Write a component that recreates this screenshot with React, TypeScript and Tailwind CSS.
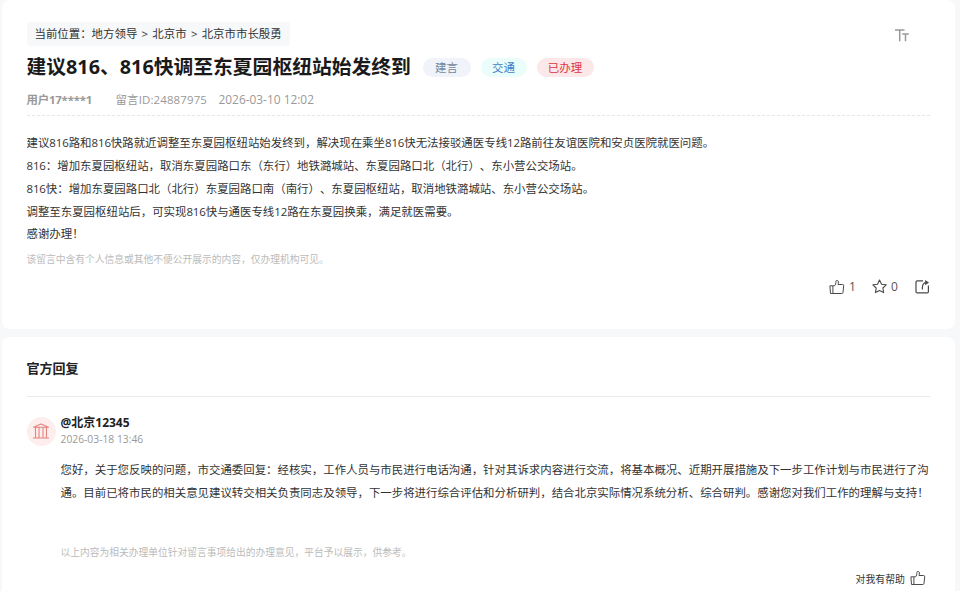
import React from 'react';

function ThumbIcon() {
  return (
    <svg width="16" height="16" viewBox="0 0 16 16" fill="none" stroke="#4a4a4a" strokeWidth="1" strokeLinejoin="round" aria-hidden="true">
      <path d="M.9 6.8h3v7.7H1.5zM3.9 6.8h1.6C6.7 5.8 6.9 4.3 6.9 2.4c0-1.4 2.5-1.4 2.5.5 0 1.1-.1 1.8-.4 2.6h4.6c.8 0 1.2.5 1.1 1.2l-.7 6.7c-.1.7-.5 1.1-1.2 1.1H3.9" />
    </svg>
  );
}

function StarIcon() {
  return (
    <svg width="16" height="16" viewBox="0 0 16 16" fill="none" stroke="#4a4a4a" strokeWidth="1.1" strokeLinejoin="round" aria-hidden="true">
      <path d="M7.5 1l2.1 4.2 4.6.6-3.3 3.2.8 4.6-4.2-2.2-4.1 2.2.8-4.6L.9 5.8l4.6-.6z" />
    </svg>
  );
}

function ShareIcon() {
  return (
    <svg width="16" height="16" viewBox="0 0 16 16" fill="none" stroke="#4a4a4a" strokeWidth="1.2" aria-hidden="true">
      <path d="M9 1.8H3.2c-.8 0-1.2.4-1.2 1.2v9.7c0 .8.4 1.2 1.2 1.2h10c.8 0 1.2-.4 1.2-1.2V6.5" />
      <path d="M8.4 10.5V8.6c0-3.2 1.4-4.9 4-4.9" />
      <path d="M11.2 1L15 3.6l-3.8 2.6z" fill="#4a4a4a" stroke="none" />
    </svg>
  );
}

function FontSizeIcon() {
  return (
    <svg width="16" height="14" viewBox="0 0 16 14" fill="none" stroke="#999" aria-hidden="true">
      <path d="M1 1.9h9.5M5.7 1.9v11.3" strokeWidth="1.5" />
      <path d="M8.2 5.9h6.6M11.5 5.9v7.3" strokeWidth="1.5" />
    </svg>
  );
}

function OfficeIcon() {
  return (
    <svg width="18" height="18" viewBox="0 0 18 18" fill="none" stroke="#e4827f" strokeWidth="1.1" aria-hidden="true">
      <path d="M1.5 5.2L9 1.9l7.5 3.3zM3.5 5.2v10.5M7 5.2v10.5M11 5.2v10.5M14.5 5.2v10.5M1 16h16" strokeLinejoin="round" />
    </svg>
  );
}

// Digits sit a little tighter than the font's own advance
function Num({ children }: { children: React.ReactNode }) {
  return <span className="tracking-[-0.1px]">{children}</span>;
}

export default function App() {
  return (
    <div className="h-[591px] overflow-hidden bg-[#f7f8fa] pl-[2px] pr-[5px] font-['Open_Sans','Noto_Sans_CJK_SC',sans-serif] text-[11.43px] text-[#333] [text-spacing-trim:space-all]">
      {/* Message card */}
      <section className="flex h-[329px] flex-col rounded-lg bg-white pl-[24.5px] pr-[25px] pt-[22px]">
        <div className="flex h-6 items-center justify-between">
          <nav className="flex h-6 w-[263px] items-center whitespace-pre rounded-xs bg-[#f6f8fa] pl-2 [word-spacing:1.3px]">
            当前位置：地方领导 &gt; 北京市 &gt; 北京市市长殷勇
          </nav>
          <button className="mr-[20px] mt-px" aria-label="字号"><FontSizeIcon /></button>
        </div>

        <div className="flex h-[42px] items-center">
          <h1 className="w-[396px] whitespace-nowrap text-[19.8px] font-bold text-[#1a1a1a]">
            建议816、816快调至东夏园枢纽站始发终到
          </h1>
          <span className="flex h-[19px] w-12 items-center justify-center rounded-full bg-[#f0f3f9] pt-px text-[#71879c]">建言</span>
          <span className="ml-[10px] flex h-[19px] w-[46px] items-center justify-center rounded-full bg-[#ebfdfb] pt-px text-[#3f7fc9]">交通</span>
          <span className="ml-[10px] flex h-[19px] w-[57px] items-center justify-center rounded-full bg-[#fce8e9] pt-px text-[#dc3545]">已办理</span>
        </div>

        <div className="flex h-[28px] items-center whitespace-nowrap border-b border-dashed border-[#e6e6e6] pb-[4px] text-[#999]">
          <span className="w-[89px] font-bold tracking-[-0.2px]">用户17****1</span>
          <span className="w-[103px] tracking-[0.15px]">留言ID:24887975</span>
          <span className="text-[11.9px]">2026-03-10 12:02</span>
        </div>

        <div className="mt-[16px] whitespace-nowrap leading-[22.85px]">
          <p>建议<Num>816</Num>路和<Num>816</Num>快路就近调整至东夏园枢纽站始发终到，解决现在乘坐<Num>816</Num>快无法接驳通医专线<Num>12</Num>路前往友谊医院和安贞医院就医问题。</p>
          <p><Num>816</Num>：增加东夏园枢纽站，取消东夏园路口东（东行）地铁潞城站、东夏园路口北（北行）、东小营公交场站。</p>
          <p><Num>816</Num>快：增加东夏园路口北（北行）东夏园路口南（南行）、东夏园枢纽站，取消地铁潞城站、东小营公交场站。</p>
          <p>调整至东夏园枢纽站后，可实现<Num>816</Num>快与通医专线<Num>12</Num>路在东夏园换乘，满足就医需要。</p>
          <p>感谢办理！</p>
        </div>
        <p className="mt-[4px] text-[9.75px] leading-[20px] text-[#bbb]">该留言中含有个人信息或其他不便公开展示的内容，仅办理机构可见。</p>

        <div className="mt-[9px] flex h-4 items-center justify-end text-[12px] text-[#555]">
          <ThumbIcon />
          <span className="ml-1 w-[23px]">1</span>
          <StarIcon />
          <span className="ml-[3px] w-[23px]">0</span>
          <ShareIcon />
        </div>
      </section>

      {/* Official reply */}
      <section className="mt-2 flex h-[270px] flex-col rounded-t-lg bg-white pl-[24.5px] pr-[25px]">
        <h2 className="flex h-[60px] items-center border-b border-[#ebebeb] pt-[5px] text-[13px] font-bold text-[#222]">官方回复</h2>

        <div className="mt-[17px] flex h-[34px] items-center">
          <span className="flex size-[29px] items-center justify-center rounded-full bg-[#fdeeed]"><OfficeIcon /></span>
          <div className="ml-[5px]">
            <div className="text-[12px] font-bold leading-[17px] text-[#222]">@北京12345</div>
            <div className="text-[10.3px] leading-[17px] text-[#999]">2026-03-18 13:46</div>
          </div>
        </div>

        <div className="ml-[34px] mt-[11px] whitespace-nowrap leading-[22.85px]">
          <p>您好，关于您反映的问题，市交通委回复：经核实，工作人员与市民进行电话沟通，针对其诉求内容进行交流，将基本概况、近期开展措施及下一步工作计划与市民进行了沟</p>
          <p>通。目前已将市民的相关意见建议转交相关负责同志及领导，下一步将进行综合评估和分析研判，结合北京实际情况系统分析、综合研判。感谢您对我们工作的理解与支持！</p>
        </div>
        <p className="ml-[34px] mt-[38px] text-[9.75px] leading-[20px] text-[#bbb]">以上内容为相关办理单位针对留言事项给出的办理意见，平台予以展示，供参考。</p>

        <div className="mt-[9px] flex h-4 items-center justify-end gap-[5px] pr-[4px] text-[9.9px]">
          <span>对我有帮助</span>
          <span className="-mt-1"><ThumbIcon /></span>
        </div>
      </section>
    </div>
  );
}
